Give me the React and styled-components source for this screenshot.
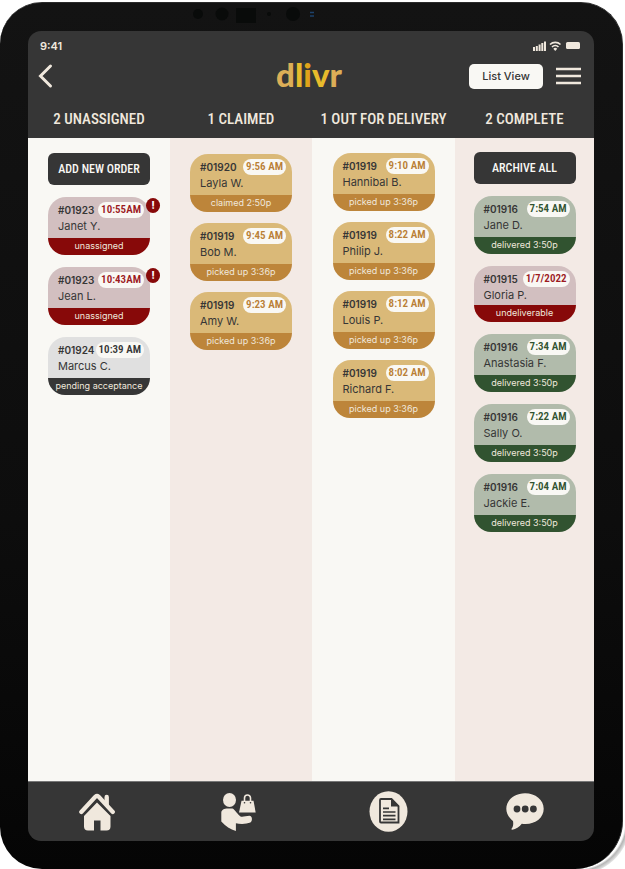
import React from "react";
import styled, { createGlobalStyle } from "styled-components";

const ink = "#363636";
const cream = "#f9f8f4";
const blush = "#f3eae5";
const linen = "#f0e8dd";
const condensed = '"Roboto Condensed", "Liberation Sans Narrow", "Liberation Sans", sans-serif';
const body = 'Inter, "Liberation Sans", sans-serif';

const tones = {
  red: { top: "#d2bfc0", bar: "#870909", time: "#9c1a1f" },
  gray: { top: "#e0e0e0", bar: "#363636", time: "#363636" },
  gold: { top: "#dab978", bar: "#bd853a", time: "#b97f35" },
  green: { top: "#b1bbab", bar: "#315330", time: "#315330" },
};

const GlobalStyle = createGlobalStyle`
  *, *::before, *::after { box-sizing: border-box; }
  body { margin: 0; background: #fff; font-family: ${body}; color: ${ink}; }
  button { font: inherit; border: 0; cursor: pointer; }
  h1, h2, h3, p { margin: 0; font-weight: 400; }
`;

const Page = styled.div`
  min-height: 100vh;
  display: flex;
  padding: 2px 2px 0 0;
  background: radial-gradient(circle at 0 0, transparent 48px, #b5b5b5 50px, #dedede 53px, transparent 54px)
    right bottom / 48px 48px no-repeat;
`;

const Device = styled.div`
  flex: 1;
  display: flex;
  flex-direction: column;
  padding: 0 28px 28px 28px;
  border: 1px solid #2b2b2b;
  border-width: 1px 1px 0 0;
  border-radius: 42px 42px 48px 42px;
  background: linear-gradient(180deg, #131313 0%, #0d0d0d 60%, #050505 100%);
`;

const Bezel = styled.div`
  height: 28px;
  display: flex;
  justify-content: center;
`;

const Screen = styled.div`
  flex: 1;
  display: flex;
  flex-direction: column;
  overflow: hidden;
  border-radius: 13px;
  background: ${ink};
`;

const StatusBar = styled.div`
  height: 29px;
  padding: 0 14px 0 12px;
  display: flex;
  align-items: center;
  justify-content: space-between;
  color: ${linen};
  font-size: 11px;
  font-weight: 600;
`;

const TopBar = styled.header`
  height: 32px;
  padding: 0 13px 0 9px;
  display: grid;
  grid-template-columns: 1fr auto 1fr;
  align-items: center;
`;

const IconButton = styled.button`
  display: flex;
  padding: 0;
  background: none;
  color: ${linen};
`;

const Logo = styled.h1`
  padding-bottom: 4px;
  font: 900 33px/28px Lato, sans-serif;
  color: #dcae57;
`;

const LogoLetter = styled.span`
  color: ${(p) => p.$color};
`;

const Actions = styled.div`
  display: flex;
  align-items: center;
  justify-content: flex-end;
  gap: 13px;
`;

const ListButton = styled.button`
  width: 74px;
  height: 25px;
  padding: 0;
  border-radius: 5px;
  background: ${cream};
  color: ${ink};
  font-size: 11px;
  font-weight: 500;
`;

const Board = styled.main`
  flex: 1;
  display: grid;
  grid-template-columns: 142fr 142fr 143fr 139fr;
`;

const Column = styled.section`
  min-width: 0;
  display: flex;
  flex-direction: column;
  background: ${(p) => (p.$tinted ? blush : cream)};
`;

const ColumnTitle = styled.h2`
  height: 46px;
  padding-top: 11px;
  background: ${ink};
  color: ${linen};
  font: 500 15px/32px ${condensed};
  text-align: center;
  white-space: nowrap;
`;

const Stack = styled.div`
  display: flex;
  flex-direction: column;
  align-items: center;
  gap: ${(p) => p.$gap}px;
  padding-top: ${(p) => p.$top}px;
`;

const ColumnButton = styled.button`
  width: 102px;
  height: 32px;
  padding: 0;
  border-radius: 6px;
  background: ${ink};
  color: ${cream};
  font: 500 12px/32px ${condensed};
`;

const Card = styled.article`
  position: relative;
  width: 102px;
  display: flex;
  flex-direction: column;
`;

const CardTop = styled.div`
  height: ${(p) => (p.$compact ? 39 : 41)}px;
  padding: 5px 6px 0 10px;
  border-radius: 18px 18px 0 0;
  background: ${(p) => p.$tone.top};
`;

const CardLine = styled.div`
  display: flex;
  align-items: center;
  justify-content: space-between;
`;

const OrderId = styled.h3`
  font-size: 10px;
  line-height: 16px;
  font-weight: 600;
`;

const Time = styled.time`
  padding: 0 3px;
  border-radius: 8px;
  background: ${cream};
  color: ${(p) => p.$tone.time};
  font: 600 11px/16px ${condensed};
  white-space: nowrap;
`;

const Customer = styled.p`
  font-size: 11px;
  line-height: 17px;
`;

const CardStatus = styled.p`
  height: 17px;
  border-radius: 0 0 18px 18px;
  background: ${(p) => p.$tone.bar};
  color: ${linen};
  font-size: 9px;
  line-height: 16px;
  text-align: center;
  white-space: nowrap;
`;

const Alert = styled.span`
  position: absolute;
  top: 1px;
  right: -10px;
  width: 14px;
  height: 15px;
  border-radius: 50%;
  background: #870909;
  color: #fff;
  font-size: 11px;
  line-height: 15px;
  font-weight: 700;
  text-align: center;
`;

const NavBar = styled.nav`
  height: 60px;
  padding-right: 9px;
  display: grid;
  grid-template-columns: 137fr 146fr 154fr 120fr;
  align-items: center;
  border-top: 1px solid #777;
`;

const NavLink = styled.a`
  display: flex;
  justify-content: center;
  color: ${linen};
`;

const columns = [
  {
    title: "2 UNASSIGNED",
    action: "ADD NEW ORDER",
    top: 15,
    gap: 12,
    orders: [
      { id: "#01923", time: "10:55AM", name: "Janet Y.", status: "unassigned", tone: "red", alert: true },
      { id: "#01923", time: "10:43AM", name: "Jean L.", status: "unassigned", tone: "red", alert: true },
      { id: "#01924", time: "10:39 AM", name: "Marcus C.", status: "pending acceptance", tone: "gray" },
    ],
  },
  {
    title: "1 CLAIMED",
    top: 16,
    gap: 11,
    orders: [
      { id: "#01920", time: "9:56 AM", name: "Layla W.", status: "claimed 2:50p", tone: "gold" },
      { id: "#01919", time: "9:45 AM", name: "Bob M.", status: "picked up 3:36p", tone: "gold" },
      { id: "#01919", time: "9:23 AM", name: "Amy W.", status: "picked up 3:36p", tone: "gold" },
    ],
  },
  {
    title: "1 OUT FOR DELIVERY",
    top: 15,
    gap: 11,
    orders: [
      { id: "#01919", time: "9:10 AM", name: "Hannibal B.", status: "picked up 3:36p", tone: "gold" },
      { id: "#01919", time: "8:22 AM", name: "Philip J.", status: "picked up 3:36p", tone: "gold" },
      { id: "#01919", time: "8:12 AM", name: "Louis P.", status: "picked up 3:36p", tone: "gold" },
      { id: "#01919", time: "8:02 AM", name: "Richard F.", status: "picked up 3:36p", tone: "gold" },
    ],
  },
  {
    title: "2 COMPLETE",
    action: "ARCHIVE ALL",
    top: 14,
    gap: 12,
    orders: [
      { id: "#01916", time: "7:54 AM", name: "Jane D.", status: "delivered 3:50p", tone: "green" },
      { id: "#01915", time: "1/7/2022", name: "Gloria P.", status: "undeliverable", tone: "red", compact: true },
      { id: "#01916", time: "7:34 AM", name: "Anastasia F.", status: "delivered 3:50p", tone: "green" },
      { id: "#01916", time: "7:22 AM", name: "Sally O.", status: "delivered 3:50p", tone: "green" },
      { id: "#01916", time: "7:04 AM", name: "Jackie E.", status: "delivered 3:50p", tone: "green" },
    ],
  },
];

function OrderCard({ order }) {
  const tone = tones[order.tone];
  return (
    <Card>
      <CardTop $tone={tone} $compact={order.compact}>
        <CardLine>
          <OrderId>{order.id}</OrderId>
          <Time $tone={tone}>{order.time}</Time>
        </CardLine>
        <Customer>{order.name}</Customer>
      </CardTop>
      <CardStatus $tone={tone}>{order.status}</CardStatus>
      {order.alert && <Alert>!</Alert>}
    </Card>
  );
}

const Cameras = () => (
  <svg width="250" height="28" viewBox="0 0 250 28" aria-hidden="true">
    <g fill="#090b0a">
      <circle cx="12" cy="11" r="5" />
      <circle cx="36" cy="11" r="6.500" />
      <rect x="50" y="5" width="20" height="15" />
      <circle cx="83" cy="11" r="2" />
      <circle cx="107" cy="11" r="7" />
    </g>
    <path d="M124 9.500h4M124 13h4" stroke="#1d426b" strokeWidth="1.500" />
  </svg>
);

const StatusIcons = () => (
  <svg width="47" height="10" viewBox="0 0 47 10" fill={linen} aria-hidden="true">
    <path d="M0 6h2v4H0zM2.800 5h2v5h-2zM5.600 3.500h2V10h-2zM8.300 2h2v8h-2zM11 .5h2V10h-2z" />
    <path d="M17 3.500a7.500 7.500 0 0 1 10.500 0M19 6a4.600 4.600 0 0 1 6.500 0" fill="none" stroke={linen} strokeWidth="1.600" />
    <path d="M20.300 7.700a3 3 0 0 1 3.900 0L22.250 10z" />
    <rect x="33" y="1" width="14" height="7" rx="1.500" />
  </svg>
);

const HomeIcon = () => (
  <svg width="36" height="38" viewBox="0 0 36 38" fill="currentColor" aria-hidden="true">
    <path d="M18 9.500 31.500 23v10.500a4 4 0 0 1-4 4H21.500v-10h-6.500v10H9a4 4 0 0 1-4-4V23z" />
    <path d="M2.300 19 16.500 3.500q1.500-1.300 3 0L33.800 19" fill="none" stroke={ink} strokeWidth="8" />
    <path d="M2.300 19 16.500 3.500q1.500-1.300 3 0L33.800 19" fill="none" stroke="currentColor" strokeWidth="4.200" strokeLinecap="round" />
    <path d="M25.500 9V4a2.200 2.200 0 0 1 4.400 0v10z" />
  </svg>
);

const CourierIcon = () => (
  <svg width="35" height="38" viewBox="0 0 35 38" fill="currentColor" aria-hidden="true">
    <ellipse cx="8.500" cy="7" rx="6.500" ry="7" />
    <path d="M.3 20C.3 17 3 15.600 7 15.600h4.500c2.500 1 5 6 8 8 2.500.8 5.500-.8 9-.8 3 .1 3.200 5.500.9 6.700-4 1.700-10.500 1.700-14.500.7v7.800C9.500 36.500 4.500 33 .3 28.500z" />
    <path d="M20.500 7.700h12l2.200 11.800H18z" />
    <path d="M23.500 9.500V5a3 3 0 0 1 6 0v4.500" fill="none" stroke="currentColor" strokeWidth="1.600" />
    <circle cx="23.500" cy="9.800" r=".8" fill={ink} />
    <circle cx="29.500" cy="9.800" r=".8" fill={ink} />
  </svg>
);

const DocumentIcon = () => (
  <svg width="39" height="41" viewBox="0 0 39 41" aria-hidden="true">
    <ellipse cx="19.500" cy="20.500" rx="19" ry="20.300" fill="currentColor" />
    <path d="M12 8h10.500l7 7v16.500H12q-1 0-1-1V9q0-1 1-1z" fill="none" stroke={ink} strokeWidth="1.800" />
    <path d="M22 7v8.500h8.300z" fill={ink} />
    <path d="M14 17.300h6M14 21h12.500M14 24.700h12.500M14 28.300h12.500" stroke={ink} strokeWidth="1.700" />
  </svg>
);

const ChatIcon = () => (
  <svg width="38" height="37" viewBox="0 0 38 37" aria-hidden="true">
    <path
      d="M19 .3C29.500.3 37.700 7 37.700 15.800S30 31 19.500 31c-1.300 0-2.500 0-3.700-.3-2.500 3-6 5.500-9.500 6-1 .1-1-.6-.6-1.200 1.500-2 1.800-4.500 1.300-7.500C3 25 .3 20.500.3 15.800.3 7 8.500.3 19 .3z"
      fill="currentColor"
    />
    <g fill={ink}>
      <circle cx="11" cy="16" r="3.400" />
      <circle cx="19.200" cy="16" r="3.400" />
      <circle cx="27.400" cy="16" r="3.400" />
    </g>
  </svg>
);

const navItems = [
  { label: "Home", Icon: HomeIcon },
  { label: "Couriers", Icon: CourierIcon },
  { label: "Orders", Icon: DocumentIcon },
  { label: "Messages", Icon: ChatIcon },
];

export default function App() {
  return (
    <Page>
      <GlobalStyle />
      <Device>
        <Bezel>
          <Cameras />
        </Bezel>
        <Screen>
          <StatusBar>
            <span>9:41</span>
            <StatusIcons />
          </StatusBar>
          <TopBar>
            <IconButton aria-label="Back">
              <svg width="16" height="26" viewBox="0 0 16 26" fill="none" aria-hidden="true">
                <path d="M13.500 3 3.500 13l10 10" stroke="currentColor" strokeWidth="3" strokeLinecap="round" />
              </svg>
            </IconButton>
            <Logo>
              d<LogoLetter $color="#e8bb2c">l</LogoLetter>
              <LogoLetter $color="#e0a31a">i</LogoLetter>
              <LogoLetter $color="#e8bb2c">v</LogoLetter>r
            </Logo>
            <Actions>
              <ListButton>List View</ListButton>
              <IconButton aria-label="Menu">
                <svg width="25" height="18" viewBox="0 0 25 18" aria-hidden="true">
                  <path d="M0 2h25M0 9h25M0 16h25" stroke="currentColor" strokeWidth="2.600" />
                </svg>
              </IconButton>
            </Actions>
          </TopBar>
          <Board>
            {columns.map((column, index) => (
              <Column key={column.title} $tinted={index % 2 === 1}>
                <ColumnTitle>{column.title}</ColumnTitle>
                <Stack $top={column.top} $gap={column.gap}>
                  {column.action && <ColumnButton>{column.action}</ColumnButton>}
                  {column.orders.map((order, i) => (
                    <OrderCard key={i} order={order} />
                  ))}
                </Stack>
              </Column>
            ))}
          </Board>
          <NavBar>
            {navItems.map(({ label, Icon }) => (
              <NavLink key={label} href="#" aria-label={label}>
                <Icon />
              </NavLink>
            ))}
          </NavBar>
        </Screen>
      </Device>
    </Page>
  );
}
